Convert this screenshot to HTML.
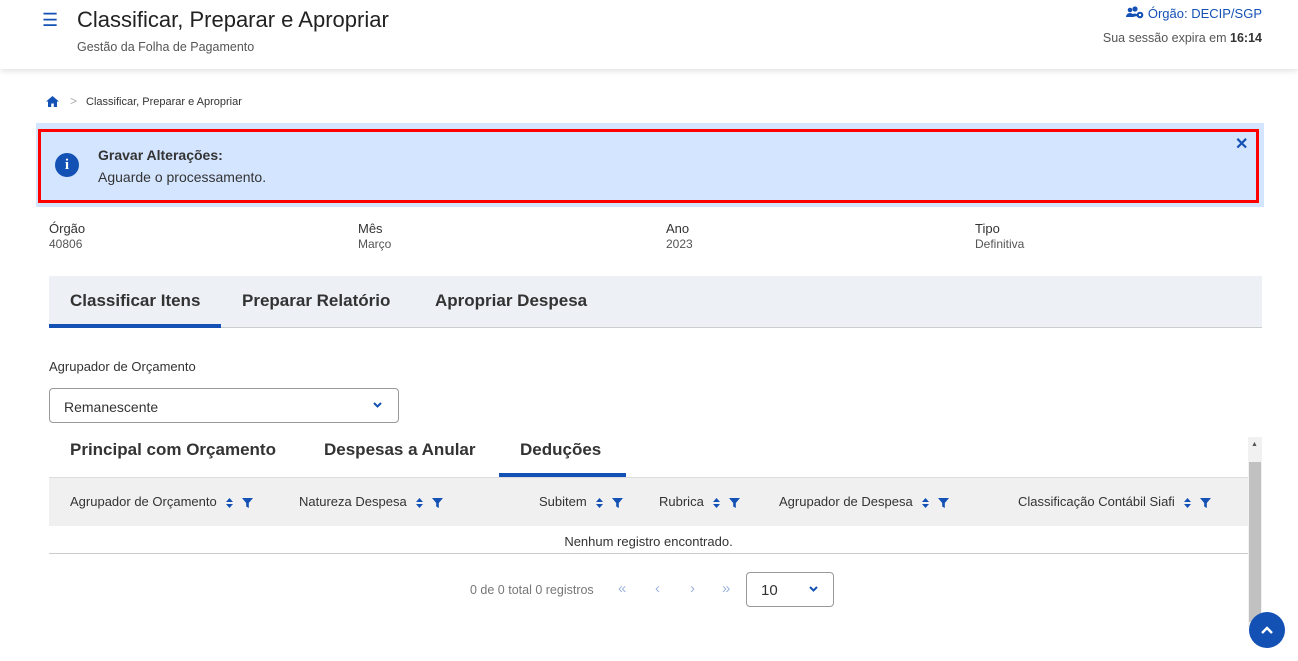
<!DOCTYPE html>
<html><head><meta charset="utf-8"><style>
*{box-sizing:border-box;margin:0;padding:0}
body{width:1298px;height:661px;overflow:hidden;background:#fff;font-family:"Liberation Sans",sans-serif;color:#333;position:relative}
.a{position:absolute}
.blue{color:#1351b4}
.hdr{position:absolute;left:0;top:0;width:1298px;height:69px;background:#fff;box-shadow:0 2px 6px rgba(0,0,0,.12)}
.th{font-size:13px;color:#333}
.tab{position:absolute;font-size:17px;color:#333;font-weight:bold}
.sort{display:inline-block;margin-left:9px;vertical-align:middle}
</style></head><body>
<div class="hdr">
 <div class="a blue" style="left:42px;top:10px;font-size:18px">&#9776;</div>
 <div class="a" style="left:77px;top:7px;font-size:22px;color:#222">Classificar, Preparar e Apropriar</div>
 <div class="a" style="left:77px;top:40px;font-size:12.5px;color:#555">Gestão da Folha de Pagamento</div>
 <div class="a blue" style="right:36px;top:6px;font-size:13px"><svg width="18" height="13" viewBox="0 0 18 13" style="vertical-align:-1px"><circle cx="4" cy="4" r="2.3" fill="#1351b4"/><circle cx="9" cy="3" r="2.6" fill="#1351b4"/><path d="M0 11a4 4 0 0 1 8 0z M4 11a5 5 0 0 1 9-1z" fill="#1351b4"/><circle cx="14" cy="9" r="3.3" fill="#1351b4"/><circle cx="14" cy="9" r="1.2" fill="#fff"/></svg> Órgão: DECIP/SGP</div>
 <div class="a" style="right:36px;top:31px;font-size:12.5px;color:#555">Sua sessão expira em <b style="color:#333">16:14</b></div>
</div>
<svg class="a" style="left:46px;top:96px" width="13" height="11" viewBox="0 0 13 11"><path d="M6.5 0L0 5.5h2V11h3.2V7.5h2.6V11H11V5.5h2z" fill="#1351b4"/></svg>
<div class="a" style="left:70px;top:94px;font-size:12px;color:#aaa">&gt;</div>
<div class="a" style="left:86px;top:96px;font-size:11px;color:#333">Classificar, Preparar e Apropriar</div>
<div class="a" style="left:36px;top:123px;width:1228px;height:84px;background:#d4e5ff"></div>
<div class="a" style="left:38px;top:129px;width:1221px;height:74px;border:3px solid #f00"></div>
<div class="a" style="left:55px;top:153px;width:24px;height:24px;border-radius:50%;background:#1351b4;color:#fff;text-align:center;font:bold 15px/24px 'Liberation Serif',serif">i</div>
<div class="a" style="left:98px;top:147px;font-size:14px;font-weight:bold;color:#333">Gravar Alterações:</div>
<div class="a" style="left:98px;top:169px;font-size:14px;color:#333">Aguarde o processamento.</div>
<div class="a blue" style="left:1235px;top:134px;font-size:16px;font-weight:bold">&#10005;</div>
<div class="a" style="left:49px;top:221px;font-size:13px;color:#333">Órgão<br><span style="font-size:12px;color:#555">40806</span></div>
<div class="a" style="left:358px;top:221px;font-size:13px;color:#333">Mês<br><span style="font-size:12px;color:#555">Março</span></div>
<div class="a" style="left:666px;top:221px;font-size:13px;color:#333">Ano<br><span style="font-size:12px;color:#555">2023</span></div>
<div class="a" style="left:975px;top:221px;font-size:13px;color:#333">Tipo<br><span style="font-size:12px;color:#555">Definitiva</span></div>
<div class="a" style="left:49px;top:276px;width:1213px;height:52px;background:#edf0f5;border-bottom:1px solid #ccc"></div>
<div class="tab" style="left:70px;top:291px">Classificar Itens</div>
<div class="a" style="left:49px;top:324px;width:172px;height:4px;background:#1351b4"></div>
<div class="tab" style="left:242px;top:291px">Preparar Relatório</div>
<div class="tab" style="left:435px;top:291px">Apropriar Despesa</div>
<div class="a" style="left:49px;top:359px;font-size:13px;color:#333">Agrupador de Orçamento</div>
<div class="a" style="left:49px;top:388px;width:350px;height:35px;border:1px solid #999;border-radius:4px;padding:10px 14px;font-size:14px;color:#333">Remanescente<svg style="position:absolute;right:16px;top:13px" width="9" height="6" viewBox="0 0 9 6"><path d="M1 1l3.5 3.5L8 1" stroke="#1351b4" stroke-width="2" fill="none"/></svg></div>
<div class="tab" style="left:70px;top:440px">Principal com Orçamento</div>
<div class="tab" style="left:324px;top:440px">Despesas a Anular</div>
<div class="tab" style="left:520px;top:440px">Deduções</div>
<div class="a" style="left:499px;top:473px;width:127px;height:4px;background:#1351b4"></div>
<div class="a" style="left:49px;top:477px;width:1199px;height:49px;background:#f0f0f0;border-top:1px solid #ddd"></div>
<svg width="0" height="0" style="position:absolute"><defs><g id="ic"><path d="M0 5l3.5-4 3.5 4z M0 7l3.5 4 3.5-4z" fill="#1351b4"/><path d="M16 1h11l-4.2 5v5l-2.6-1.5V6z" fill="#1351b4"/></g></defs></svg>
<div class="a th" style="left:70px;top:494px">Agrupador de Orçamento<svg class="sort" width="28" height="12"><use href="#ic"/></svg></div>
<div class="a th" style="left:299px;top:494px">Natureza Despesa<svg class="sort" width="28" height="12"><use href="#ic"/></svg></div>
<div class="a th" style="left:539px;top:494px">Subitem<svg class="sort" width="28" height="12"><use href="#ic"/></svg></div>
<div class="a th" style="left:659px;top:494px">Rubrica<svg class="sort" width="28" height="12"><use href="#ic"/></svg></div>
<div class="a th" style="left:779px;top:494px">Agrupador de Despesa<svg class="sort" width="28" height="12"><use href="#ic"/></svg></div>
<div class="a th" style="left:1018px;top:494px">Classificação Contábil Siafi<svg class="sort" width="28" height="12"><use href="#ic"/></svg></div>
<div class="a" style="left:49px;top:534px;width:1199px;text-align:center;font-size:13px;color:#333">Nenhum registro encontrado.</div>
<div class="a" style="left:49px;top:553px;width:1199px;height:1px;background:#ccc"></div>
<div class="a" style="left:470px;top:583px;font-size:12.5px;color:#777">0 de 0 total 0 registros</div>
<div class="a" style="left:618px;top:580px;font-size:15px;color:#9fb5dc">«</div>
<div class="a" style="left:655px;top:580px;font-size:15px;color:#9fb5dc">‹</div>
<div class="a" style="left:690px;top:580px;font-size:15px;color:#9fb5dc">›</div>
<div class="a" style="left:722px;top:580px;font-size:15px;color:#9fb5dc">»</div>
<div class="a" style="left:746px;top:572px;width:88px;height:35px;border:1px solid #999;border-radius:4px;padding:9px 14px;font-size:15px;color:#333">10<svg style="position:absolute;right:15px;top:13px" width="9" height="6" viewBox="0 0 9 6"><path d="M1 1l3.5 3.5L8 1" stroke="#1351b4" stroke-width="2" fill="none"/></svg></div>
<div class="a" style="left:1248px;top:437px;width:14px;height:190px;background:#f1f1f1"></div>
<div class="a" style="left:1249px;top:462px;width:12px;height:160px;background:#c1c1c1"></div>
<div class="a" style="left:1251px;top:441px;font-size:7px;color:#555">&#9650;</div>
<div class="a" style="left:1249px;top:612px;width:36px;height:36px;border-radius:50%;background:#1351b4"><svg style="position:absolute;left:12px;top:14px" width="12" height="8" viewBox="0 0 12 8"><path d="M1 7l5-5 5 5" stroke="#fff" stroke-width="2.4" fill="none"/></svg></div>
</body></html>
